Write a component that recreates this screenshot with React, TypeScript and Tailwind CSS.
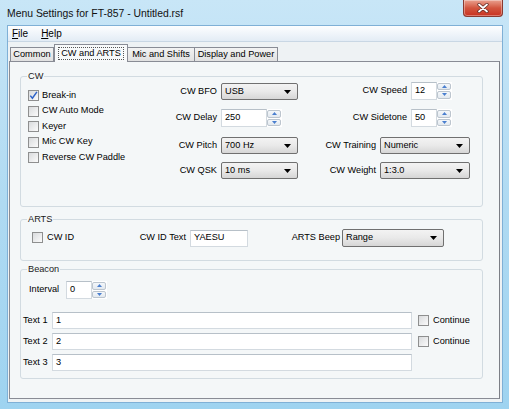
import React from "react";

function Check({ checked = false }: { checked?: boolean }) {
  return (
    <span className="w-[11px] h-[11px] shrink-0 border border-[#8e8f8f] bg-linear-to-br from-[#d9dbdd] to-[#fbfbfb] flex items-center justify-center">
      {checked && (
        <svg width="9" height="9" viewBox="0 0 9 9">
          <path d="M1.3 4.6 L3.4 7.2 L7.9 0.9" stroke="#2f63c8" strokeWidth="1.5" fill="none" />
        </svg>
      )}
    </span>
  );
}

function CheckRow({ label, checked = false }: { label: string; checked?: boolean }) {
  return (
    <div className="flex items-center gap-[3px] h-[15.5px]">
      <Check checked={checked} />
      <span className="whitespace-nowrap">{label}</span>
    </div>
  );
}

function Combo({ value, w, h = "h-[17px]" }: { value: string; w: string; h?: string }) {
  return (
    <div
      className={`${w} ${h} shrink-0 border border-[#707070] rounded-[2px] bg-linear-to-b from-[#f3f3f3] via-[#e9e9e9] to-[#d6d6d6] flex items-center justify-between pl-[3px] pr-[6px]`}
    >
      <span className="whitespace-nowrap">{value}</span>
      <svg width="7" height="4" viewBox="0 0 7 4">
        <path d="M0 0 H7 L3.5 4 Z" fill="#000" />
      </svg>
    </div>
  );
}

function TextBox({ value, w, h = "h-[17px]" }: { value: string; w: string; h?: string }) {
  return (
    <div
      className={`${w} ${h} shrink-0 bg-white border border-[#d3dae0] border-t-[#b7c0c8] flex items-center pl-[3px]`}
    >
      <span className="whitespace-nowrap">{value}</span>
    </div>
  );
}

function Spin({ value, w }: { value: string; w: string }) {
  return (
    <div className="flex h-[18px] shrink-0">
      <div className={`${w} h-full bg-white border border-[#d3dae0] border-t-[#b7c0c8] flex items-center pl-[3px]`}>
        {value}
      </div>
      <div className="w-[15px] h-full bg-white flex flex-col gap-px py-px pr-px">
        <div className="flex-1 border border-[#bcc5ce] rounded-[2px] bg-linear-to-b from-[#f4f7fa] to-[#e3e9ef] flex items-center justify-center">
          <svg width="5" height="3" viewBox="0 0 5 3">
            <path d="M0 3 H5 L2.5 0 Z" fill="#4a7fcf" />
          </svg>
        </div>
        <div className="flex-1 border border-[#bcc5ce] rounded-[2px] bg-linear-to-b from-[#f4f7fa] to-[#e3e9ef] flex items-center justify-center">
          <svg width="5" height="3" viewBox="0 0 5 3">
            <path d="M0 0 H5 L2.5 3 Z" fill="#4a7fcf" />
          </svg>
        </div>
      </div>
    </div>
  );
}

function Legend({ children }: { children: React.ReactNode }) {
  return <legend className="ml-[6px] px-[1px] leading-[12px] text-[#1a1a1a]">{children}</legend>;
}

export default function App() {
  return (
    <div className="w-[509px] h-[409px] overflow-hidden font-['Liberation_Sans',Arial,sans-serif] text-[9.2px] text-black bg-linear-to-b from-[#c8e6f7] via-[#afdaf2] to-[#9ed3f0] flex flex-col">
      {/* Title bar */}
      <div className="h-[26px] shrink-0 flex justify-between pl-[7px] pr-[6px]">
        <div className="self-center mt-[1px] text-[10.4px] text-[#111] whitespace-nowrap">
          Menu Settings for FT-857 - Untitled.rsf
        </div>
        <div className="self-start w-[40px] h-[17px] rounded-b-[4px] border border-t-0 border-[#8a3a30] bg-linear-to-b from-[#e9a08f] via-[#d2553f] to-[#c8301f] flex items-center justify-center shadow-[inset_0_0_0_1px_rgba(255,255,255,0.35)]">
          <svg width="12" height="10" viewBox="0 0 12 10">
            <path d="M2 1.5 L10 8.5 M10 1.5 L2 8.5" stroke="#5a2520" strokeWidth="3.2" strokeLinecap="round" />
            <path d="M2 1.5 L10 8.5 M10 1.5 L2 8.5" stroke="#ffffff" strokeWidth="1.8" strokeLinecap="round" />
          </svg>
        </div>
      </div>

      {/* Client */}
      <div className="ml-[8px] mr-[7px] h-[376px] shrink-0 bg-[#eef2f4] flex flex-col shadow-[0_0_0_1px_#7fb0d6]">
        {/* Menu bar */}
        <div className="h-[16px] shrink-0 bg-linear-to-b from-[#fdfeff] to-[#e3ecf5] border-b border-[#c9d7e4] flex items-center gap-[13px] pl-[4px] text-[10px]">
          <span>
            <u>F</u>ile
          </span>
          <span>
            <u>H</u>elp
          </span>
        </div>

        {/* Tabs */}
        <div className="h-[19px] shrink-0 flex items-end pl-[2px] relative z-10">
          <div className="w-[44px] h-[14px] border border-b-0 border-[#898c95] bg-linear-to-b from-[#f3f3f3] to-[#e1e1e1] flex items-center justify-center whitespace-nowrap">
            Common
          </div>
          <div className="w-[74px] h-[18px] -mb-px border border-b-0 border-[#898c95] bg-[#f7f9fa] flex items-center justify-center">
            <span className="border border-dotted border-[#555] px-[2px] leading-[11px] whitespace-nowrap">CW and ARTS</span>
          </div>
          <div className="w-[67px] h-[14px] border border-b-0 border-l-0 border-[#898c95] bg-linear-to-b from-[#f3f3f3] to-[#e1e1e1] flex items-center justify-center whitespace-nowrap">
            Mic and Shifts
          </div>
          <div className="w-[83px] h-[14px] border border-b-0 border-l-0 border-[#898c95] bg-linear-to-b from-[#f3f3f3] to-[#e1e1e1] flex items-center justify-center whitespace-nowrap">
            Display and Power
          </div>
        </div>

        {/* Panel */}
        <div className="ml-[1px] mr-[2px] h-[338px] shrink-0 bg-[#f4f7f8] border border-[#898c95] border-r-[#7c7f86] flex flex-col">
          {/* CW group */}
          <fieldset className="mt-[8px] ml-[10px] mr-[16px] h-[137px] border border-[#d2dbe1] rounded-[3px] p-0">
            <Legend>CW</Legend>
            <div className="flex mt-[1px]">
              <div className="ml-[7px] w-[130px] mt-[5px] flex flex-col">
                <CheckRow label="Break-in" checked />
                <CheckRow label="CW Auto Mode" />
                <CheckRow label="Keyer" />
                <CheckRow label="Mic CW Key" />
                <CheckRow label="Reverse CW Paddle" />
              </div>
              <div className="w-[140px] flex flex-col">
                <div className="flex items-center h-[17px]">
                  <div className="w-[63px] pr-[4px] text-right">CW BFO</div>
                  <Combo value="USB" w="w-[77px]" />
                </div>
                <div className="flex items-center h-[18px] mt-[9px]">
                  <div className="w-[63px] pr-[4px] text-right">CW Delay</div>
                  <Spin value="250" w="w-[46px]" />
                </div>
                <div className="flex items-center h-[17px] mt-[10px]">
                  <div className="w-[63px] pr-[4px] text-right">CW Pitch</div>
                  <Combo value="700 Hz" w="w-[77px]" />
                </div>
                <div className="flex items-center h-[17px] mt-[8px]">
                  <div className="w-[63px] pr-[4px] text-right">CW QSK</div>
                  <Combo value="10 ms" w="w-[77px]" />
                </div>
              </div>
              <div className="flex flex-col">
                <div className="flex items-center h-[17px] -mt-[1px]">
                  <div className="w-[113px] pr-[4px] text-right">CW Speed</div>
                  <Spin value="12" w="w-[26px]" />
                </div>
                <div className="flex items-center h-[18px] mt-[10px]">
                  <div className="w-[113px] pr-[4px] text-right">CW Sidetone</div>
                  <Spin value="50" w="w-[26px]" />
                </div>
                <div className="flex items-center h-[17px] mt-[10px]">
                  <div className="w-[82px] pr-[4px] text-right">CW Training</div>
                  <Combo value="Numeric" w="w-[90px]" />
                </div>
                <div className="flex items-center h-[17px] mt-[8px]">
                  <div className="w-[82px] pr-[4px] text-right">CW Weight</div>
                  <Combo value="1:3.0" w="w-[90px]" />
                </div>
              </div>
            </div>
          </fieldset>

          {/* ARTS group */}
          <fieldset className="mt-[6px] ml-[10px] mr-[16px] h-[48px] border border-[#d2dbe1] rounded-[3px] p-0">
            <Legend>ARTS</Legend>
            <div className="flex items-center h-[18px] mt-[4px]">
              <div className="ml-[11px] w-[106px] flex items-center gap-[4px]">
                <Check />
                <span>CW ID</span>
              </div>
              <div className="w-[52px] pr-[4px] text-right whitespace-nowrap">CW ID Text</div>
              <TextBox value="YAESU" w="w-[58px]" />
              <div className="w-[94px] pr-[2px] text-right whitespace-nowrap">ARTS Beep</div>
              <Combo value="Range" w="w-[102px]" h="h-[18px]" />
            </div>
          </fieldset>

          {/* Beacon group */}
          <fieldset className="mt-[2px] ml-[10px] mr-[16px] h-[116px] border border-[#d2dbe1] rounded-[3px] p-0">
            <Legend>Beacon</Legend>
            <div className="flex items-center h-[18px] mt-[6px] ml-[8px]">
              <div className="w-[37px]">Interval</div>
              <Spin value="0" w="w-[26px]" />
            </div>
            {[
              { l: "Text 1", v: "1", c: true },
              { l: "Text 2", v: "2", c: true },
              { l: "Text 3", v: "3", c: false },
            ].map((r, i) => (
              <div key={r.l} className={`flex items-center h-[17px] ml-[2px] ${i === 0 ? "mt-[13px]" : "mt-[4px]"}`}>
                <div className="w-[29px] whitespace-nowrap">{r.l}</div>
                <TextBox value={r.v} w="w-[360px]" />
                {r.c && (
                  <div className="ml-[6px] flex items-center gap-[4px]">
                    <Check />
                    <span>Continue</span>
                  </div>
                )}
              </div>
            ))}
          </fieldset>
        </div>
      </div>
    </div>
  );
}
